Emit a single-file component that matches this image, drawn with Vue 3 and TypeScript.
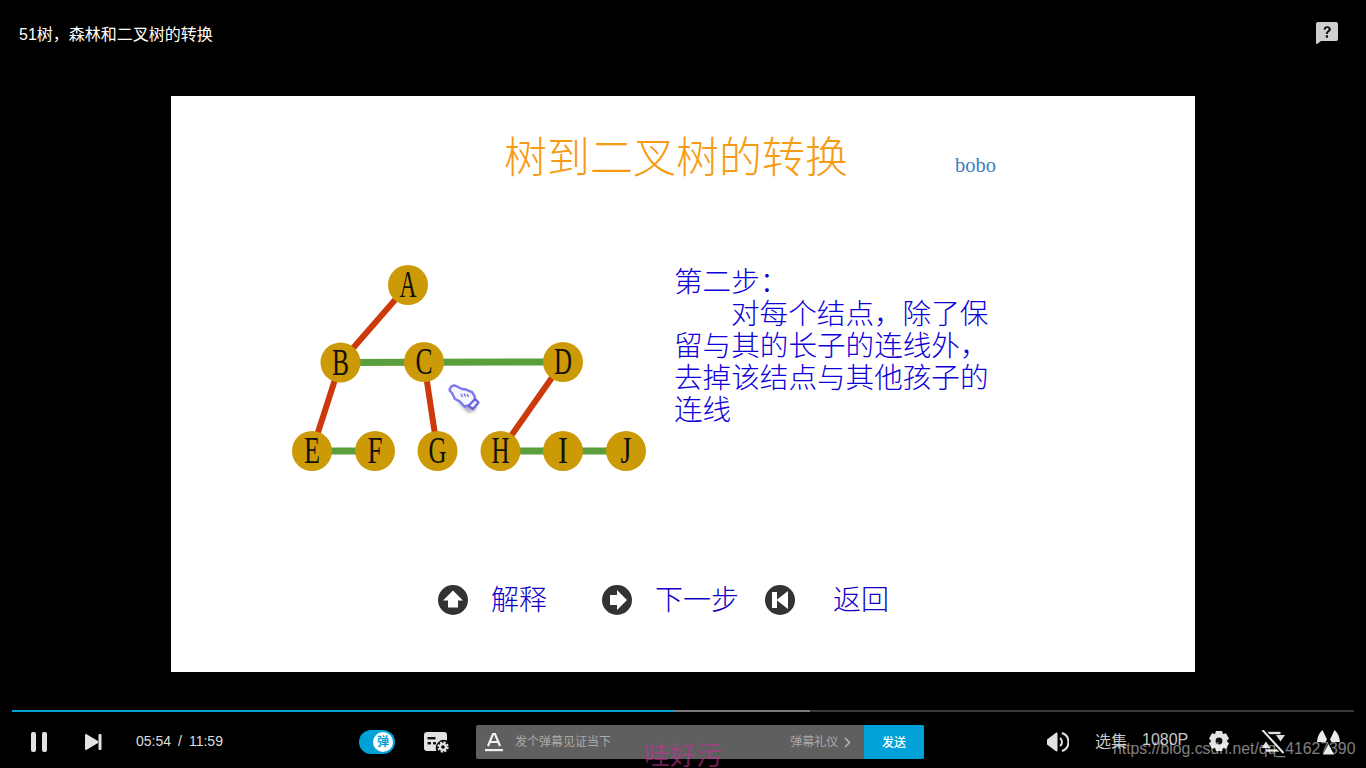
<script setup lang="ts">
interface TreeNode { id: string; x: number; y: number; w: number }
const nodes: TreeNode[] = [
  { id: 'A', x: 408, y: 285, w: 17 },
  { id: 'B', x: 340.5, y: 362.5, w: 17 },
  { id: 'C', x: 424, y: 362, w: 17 },
  { id: 'D', x: 563, y: 362, w: 18 },
  { id: 'E', x: 312, y: 451, w: 16 },
  { id: 'F', x: 375, y: 451, w: 15 },
  { id: 'G', x: 437.5, y: 451, w: 18 },
  { id: 'H', x: 500.5, y: 451, w: 18 },
  { id: 'I', x: 563, y: 451, w: 10 },
  { id: 'J', x: 626, y: 451, w: 11 },
]
const pos = (id: string) => nodes.find((n) => n.id === id) as TreeNode
const red = [['A', 'B'], ['B', 'E'], ['C', 'G'], ['D', 'H']]
const green = [['B', 'D'], ['E', 'F'], ['H', 'J']]
</script>

<template>
  <div class="player">
    <header class="top">
      <h1 class="name">51树，森林和二叉树的转换</h1>
      <svg class="help" width="22" height="22" viewBox="0 0 22 22">
        <path d="M2 0h18a2 2 0 0 1 2 2v15a2 2 0 0 1-2 2H5l-4 3a1 1 0 0 1-1-1V2a2 2 0 0 1 2-2z" fill="#cfcfcf" />
        <path d="M7.6 7.6C7.7 5.4 9.200 4.200 11.200 4.200c2.200 0 3.600 1.300 3.600 3 0 1.500-.9 2.200-1.800 2.900-.8.600-1.100 1-1.100 2H9.900c0-1.700.6-2.500 1.500-3.200.7-.6 1.200-.9 1.200-1.600 0-.7-.5-1.200-1.400-1.200-.9 0-1.500.6-1.600 1.600z" fill="#111" />
        <rect x="9.800" y="13.300" width="2.200" height="2.400" fill="#111" />
      </svg>
    </header>

    <main class="stage">
      <section class="slide">
        <div class="head">
          <h2 class="headline">树到二叉树的转换</h2>
          <span class="author">bobo</span>
        </div>
        <div class="body">
          <svg class="tree" width="370" height="215" viewBox="285 260 370 215">
            <line v-for="e in green" :key="e.join()" :x1="pos(e[0]).x" :y1="pos(e[0]).y" :x2="pos(e[1]).x" :y2="pos(e[1]).y" stroke="#5b9e3c" stroke-width="7" />
            <line v-for="e in red" :key="e.join()" :x1="pos(e[0]).x" :y1="pos(e[0]).y" :x2="pos(e[1]).x" :y2="pos(e[1]).y" stroke="#cc3a0c" stroke-width="6" />
            <g v-for="n in nodes" :key="n.id">
              <circle :cx="n.x" :cy="n.y" r="20" fill="#cc9a06" />
              <text class="letter" :x="n.x" :y="n.y + 12" text-anchor="middle" :textLength="n.w" lengthAdjust="spacingAndGlyphs">{{ n.id }}</text>
            </g>
          </svg>
          <div class="explain">
            <p>第二步：</p>
            <p class="indented">对每个结点，除了保留与其的长子的连线外，去掉该结点与其他孩子的连线</p>
          </div>
        </div>
        <nav class="steps">
          <svg class="step-icon first" width="30" height="30" viewBox="0 0 30 30">
            <circle cx="15" cy="15" r="15" fill="#333" />
            <path d="M15 5.500 25 15.500h-5v7H10v-7H5z" fill="#fff" />
          </svg>
          <span class="step-text explain-link">解释</span>
          <svg class="step-icon second" width="30" height="30" viewBox="0 0 30 30">
            <circle cx="15" cy="15" r="15" fill="#333" />
            <path d="M25 15 15 5v5H8v10h7v5z" fill="#fff" />
          </svg>
          <span class="step-text next-link">下一步</span>
          <svg class="step-icon third" width="30" height="30" viewBox="0 0 30 30">
            <circle cx="15" cy="15" r="15" fill="#333" />
            <path d="M7 7h5v7.500L23 6v18l-11-8.500V23H7z" fill="#fff" />
          </svg>
          <span class="step-text back-link">返回</span>
        </nav>
        <svg class="hand" width="34" height="32" viewBox="0 0 34 32">
          <defs>
            <filter id="soft" x="-30%" y="-30%" width="160%" height="160%"><feGaussianBlur stdDeviation="1.500" /></filter>
            <filter id="edge" x="-10%" y="-10%" width="120%" height="120%"><feGaussianBlur stdDeviation="0.500" /></filter>
          </defs>
          <path d="M3 8 8 4l7 4 8 2 5 8-3 8-7 2-8-8z" fill="#7f8099" opacity=".6" filter="url(#soft)" transform="translate(2 3)" />
          <g filter="url(#edge)">
            <path d="M2 9C1 6 4 3 7 3.500L14 7l4 .5 3 1.500 3 1 2.500 4 .5 3.500-4.500 5.500-6 1.500-4.500-5-5-2.500-3-6z" fill="#f6f6ff" stroke="#7d78ee" stroke-width="2.400" stroke-linejoin="round" />
            <path d="M20.500 24l6.500-7 3.500 3.500-5.500 6.500z" fill="#f0f0ff" stroke="#6a62dc" stroke-width="2.200" stroke-linejoin="round" />
            <path d="M13 12l1.500 3M16 11.500l1.500 3M19 12l1.500 3" stroke="#6a62dc" stroke-width="1.300" />
          </g>
        </svg>
      </section>
    </main>

    <footer class="controls">
      <div class="track">
        <span class="played"></span>
        <span class="buffered"></span>
      </div>
      <div class="bar">
        <svg class="pause" width="16" height="20" viewBox="0 0 16 20">
          <rect width="5" height="20" rx="2" fill="#e2e2e2" />
          <rect x="11" width="5" height="20" rx="2" fill="#e2e2e2" />
        </svg>
        <svg class="next" width="17" height="16" viewBox="0 0 17 16">
          <path d="M0 1.200C0 .2.800-.2 1.600.3L13 7v2L1.600 15.700C.8 16.200 0 15.800 0 14.800z" fill="#e2e2e2" />
          <rect x="13.500" width="3" height="16" rx="1" fill="#e2e2e2" />
        </svg>
        <div class="time"><span>05:54</span><span>/</span><span>11:59</span></div>
        <div class="toggle"><span class="knob">弹</span></div>
        <svg class="dm-set" width="25" height="21" viewBox="0 0 25 21">
          <path d="M3 0h17a3 3 0 0 1 3 3v5.500a8 8 0 0 0-10.500 10.500H3a3 3 0 0 1-3-3V3a3 3 0 0 1 3-3z" fill="#e2e2e2" />
          <rect x="3.500" y="5" width="8" height="2.400" fill="#111" />
          <rect x="3.500" y="10" width="3.500" height="2.400" fill="#111" />
          <rect x="9" y="10" width="3" height="2.400" fill="#111" />
          <circle cx="19" cy="15" r="3" fill="none" stroke="#e2e2e2" stroke-width="2.400" />
          <circle cx="19" cy="15" r="4.800" fill="none" stroke="#e2e2e2" stroke-width="1.800" stroke-dasharray="2.200 1.570" />
        </svg>
        <div class="composer">
          <svg class="font-a" width="18" height="20" viewBox="0 0 18 20">
            <path d="M3 14 8 2h2l5 12M5 10h8" fill="none" stroke="#f0f0f0" stroke-width="2.200" />
            <rect y="17" width="18" height="2.200" fill="#f0f0f0" />
          </svg>
          <span class="hint">发个弹幕见证当下</span>
          <span class="etiquette">弹幕礼仪</span>
          <svg class="chev" width="7" height="11" viewBox="0 0 7 11">
            <path d="M1 1l4.500 4.500L1 10" fill="none" stroke="#b5b5b5" stroke-width="1.500" />
          </svg>
          <button class="send">发送</button>
        </div>
        <svg class="volume" width="22" height="20" viewBox="0 0 22 20">
          <path d="M0 7.500 9 .8c.8-.5 1.500 0 1.500.9v16.600c0 .9-.7 1.400-1.500.9L0 12.500z" fill="#e2e2e2" />
          <path d="M13 6a5 5 0 0 1 0 8" fill="none" stroke="#e2e2e2" stroke-width="2" />
          <path d="M15 1a9.500 9.500 0 0 1 0 18" fill="none" stroke="#e2e2e2" stroke-width="2" />
        </svg>
        <span class="label episodes">选集</span>
        <span class="label quality">1080P</span>
        <svg class="gear" width="22" height="22" viewBox="0 0 22 22">
          <path d="M8 0h6l1 3 3-.8 3 5.300-2.200 2.500 2.200 2.500-3 5.300-3-.8-1 3H8l-1-3-3 .8-3-5.300L3.200 10 1 7.500l3-5.300 3 .8z" fill="#e2e2e2" />
          <circle cx="11" cy="10" r="3.400" fill="#111" />
        </svg>
        <svg class="swap" width="25" height="24" viewBox="0 0 25 24">
          <path d="M7 3h12.500" fill="none" stroke="#dcdcdc" stroke-width="2.400" />
          <path d="M15 5h9l-4.500 6.500z" fill="#dcdcdc" />
          <path d="M18 20.500H5" fill="none" stroke="#dcdcdc" stroke-width="2.400" />
          <path d="M.5 18h9L5 11.500z" fill="#dcdcdc" />
          <path d="M1.500 0l21 23" stroke="#000" stroke-width="4.500" />
          <path d="M1.500 0l21 23" stroke="#e8e8e8" stroke-width="2" />
        </svg>
        <svg class="rad" width="23" height="25" viewBox="0 0 23 25">
          <path d="M5.500 0 10 9.500 8.500 12H0C.3 7 2 3 5.500 0z" fill="#ececec" />
          <path d="M17.500 0 13 9.500l1.500 2.500H23C22.700 7 21 3 17.500 0z" fill="#ececec" />
          <path d="M11.500 14 17 24.500H6z" fill="#ececec" />
        </svg>
      </div>
      <span class="flying">哇好污</span>
      <span class="watermark">https://blog.csdn.net/qq_41627390</span>
    </footer>
  </div>
</template>

<style scoped>
.player {
  position: relative;
  width: 1366px;
  height: 768px;
  overflow: hidden;
  display: flex;
  flex-direction: column;
  background: #000;
  font-family: "Liberation Sans", "Noto Sans CJK SC", sans-serif;
}
.top {
  height: 68px;
  flex: none;
  display: flex;
  align-items: center;
  justify-content: space-between;
  padding: 0 28px 0 19px;
  box-sizing: border-box;
}
.name {
  margin: -2px 0 0;
  color: #fff;
  font-family: "Liberation Sans", "Noto Sans CJK KR", sans-serif;
  font-size: 16px;
  font-weight: 400;
}
.help { margin-top: -2px; }
.stage {
  flex: 1;
  padding: 28px 0 0 171px;
}
.slide {
  position: relative;
  width: 1024px;
  height: 576px;
  background: #fff;
  overflow: hidden;
}
.head {
  display: flex;
  align-items: flex-start;
  padding: 28px 0 0 333px;
  height: 90px;
  box-sizing: border-box;
}
.headline {
  margin: 0;
  width: 451px;
  font: 300 43px/60px "Noto Sans CJK SC", sans-serif;
  color: #f59c14;
}
.author {
  font: 20.500px/30px "Liberation Serif", serif;
  color: #3d80be;
  margin-top: 26px;
}
.body {
  display: flex;
  margin: 74px 0 0 114px;
}
.tree { flex: none; }
.letter {
  font: 38px "Liberation Serif", serif;
  fill: #111;
}
.explain {
  margin: 4px 0 0 19px;
  width: 318px;
  font: 300 28.600px/32px "Noto Sans CJK SC", sans-serif;
  color: #0e00d8;
}
.explain p { margin: 0; }
.indented { text-indent: 57px; }
.steps {
  display: flex;
  align-items: center;
  height: 40px;
  margin-top: 105px;
}
.step-icon { flex: none; }
.first { margin-left: 267px; }
.second { margin-left: 55px; }
.third { margin-left: 26px; }
.step-text {
  font: 300 28px/40px "Noto Sans CJK SC", sans-serif;
  color: #1200c4;
  white-space: nowrap;
  margin-bottom: 4px;
}
.explain-link { margin-left: 23px; }
.next-link { margin-left: 23px; }
.back-link { margin-left: 38px; }
.hand {
  position: absolute;
  left: 277px;
  top: 286px;
}
.controls {
  position: relative;
  flex: none;
  height: 58px;
}
.track {
  display: flex;
  height: 2px;
  margin: 0 12px;
  background: #3a3a3a;
}
.played { width: 661px; background: #00a1d6; }
.buffered { width: 137px; background: #7a7a7a; }
.bar {
  display: flex;
  align-items: center;
  height: 56px;
  padding-top: 4px;
  box-sizing: border-box;
  color: #ddd;
}
.bar > svg { flex: none; }
.pause { margin-left: 31px; }
.next { margin-left: 38px; }
.time {
  display: flex;
  gap: 7px;
  margin-left: 34px;
  width: 88px;
  font-size: 14px;
  color: #ddd;
  padding-bottom: 2px;
}
.toggle {
  margin-left: 135px;
  width: 36px;
  height: 24px;
  border-radius: 12px;
  background: #00a1d6;
  display: flex;
  align-items: center;
  justify-content: flex-end;
  padding-right: 2px;
  box-sizing: border-box;
}
.knob {
  width: 20px;
  height: 20px;
  border-radius: 50%;
  background: #fff;
  color: #00a1d6;
  font-size: 12px;
  font-weight: 700;
  line-height: 20px;
  text-align: center;
}
.dm-set { margin-left: 29px; }
.composer {
  display: flex;
  align-items: center;
  margin-left: 27px;
  width: 448px;
  height: 34px;
  background: #5f5f5f;
  border-radius: 2px;
  overflow: hidden;
  font-size: 12px;
  color: #aaa;
}
.font-a { margin-left: 9px; flex: none; }
.hint { margin-left: 12px; width: 276px; padding-bottom: 3px; }
.etiquette { width: 54px; padding-bottom: 3px; }
.chev { margin-left: 0; flex: none; }
.send {
  margin-left: 13px;
  width: 60px;
  height: 34px;
  border: 0;
  padding: 0 0 2px;
  background: #00a1d6;
  color: #fff;
  font: 500 12px "Liberation Sans", "Noto Sans CJK SC", sans-serif;
}
.volume { margin-left: 123px; }
.label {
  font-size: 16px;
  color: #c8c8c8;
  padding-bottom: 4px;
}
.episodes { margin-left: 26px; }
.quality { margin-left: 15px; }
.gear { margin-left: 20px; }
.swap { margin-left: 31px; }
.rad { margin-left: 31px; }
.flying {
  position: absolute;
  left: 644px;
  top: 30px;
  font: 400 26px/27px "Noto Sans CJK SC", sans-serif;
  color: rgba(195, 50, 150, 0.6);
  white-space: nowrap;
}
.watermark {
  position: absolute;
  left: 1113px;
  top: 27px;
  font-size: 15.800px;
  line-height: 24px;
  color: rgba(255, 255, 255, 0.5);
  white-space: nowrap;
}
</style>
